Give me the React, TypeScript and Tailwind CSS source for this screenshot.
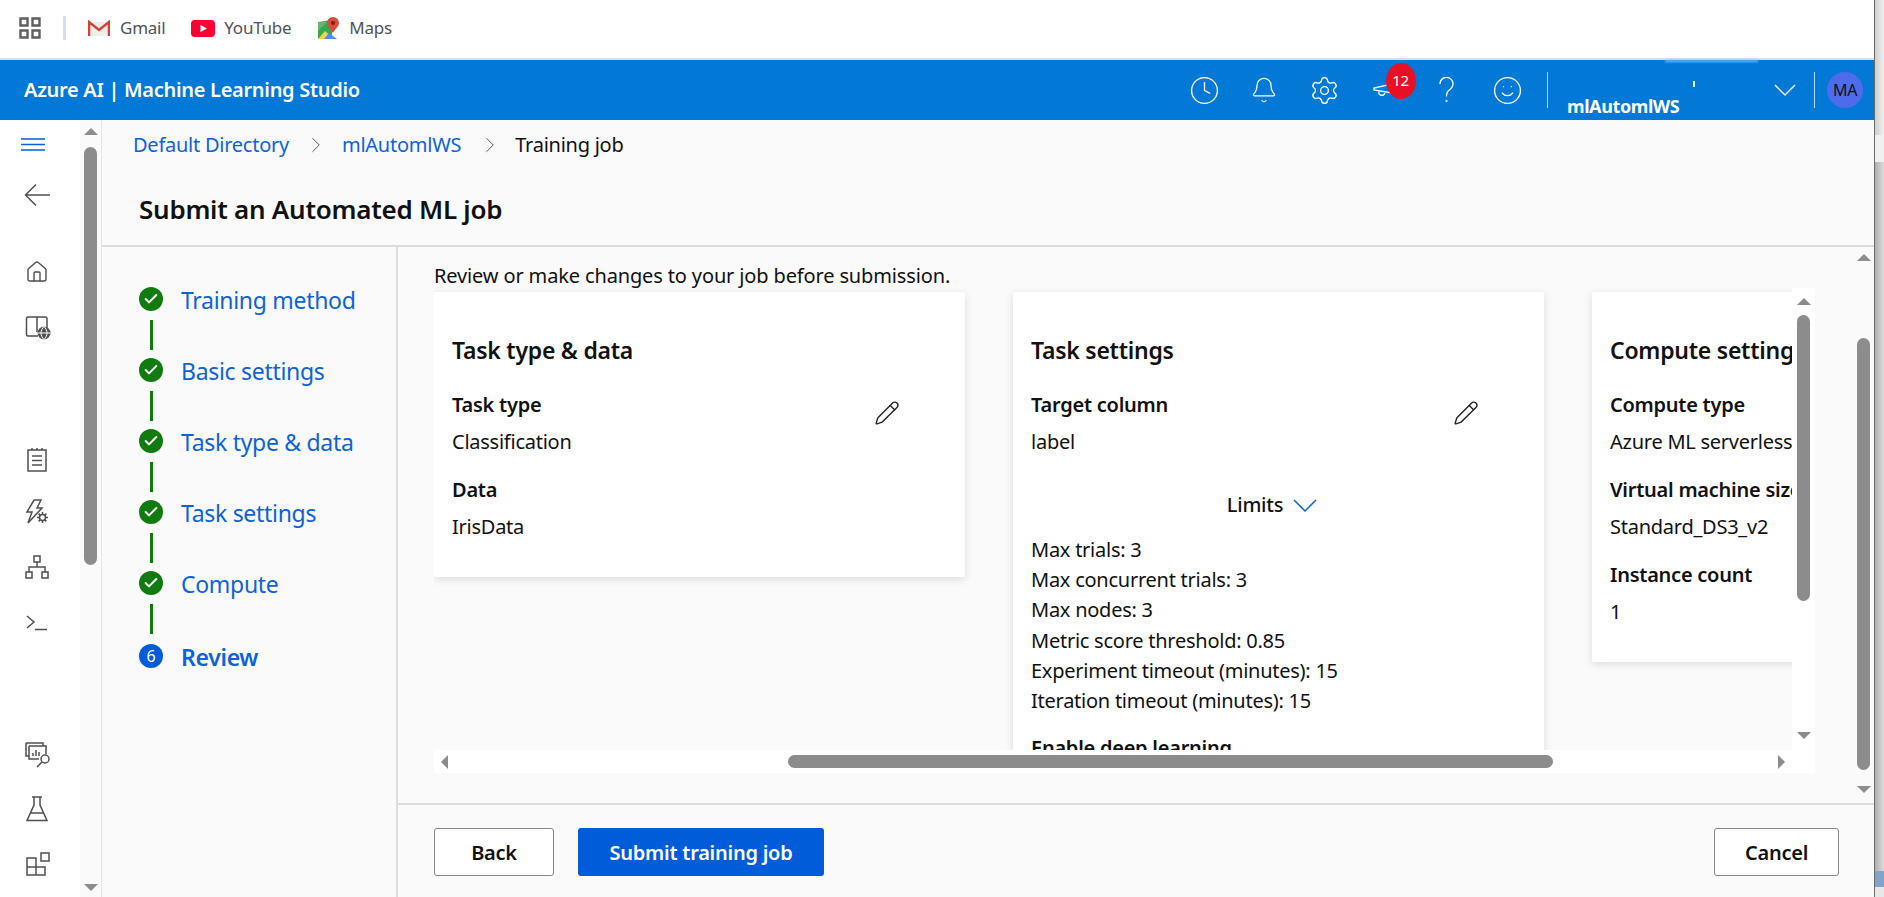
import React from "react";
import { Clock, Bell, Settings, Smile, ChevronRight, Pencil, Home, Check } from "lucide-react";

const Up = () => <div className="w-0 h-0 border-x-[7.5px] border-x-transparent border-b-[7.5px] border-b-[#8c8c8c]" />;
const Down = () => <div className="w-0 h-0 border-x-[7.5px] border-x-transparent border-t-[7.5px] border-t-[#8c8c8c]" />;
const Left = () => <div className="w-0 h-0 border-y-[7.5px] border-y-transparent border-r-[7.5px] border-r-[#8c8c8c]" />;
const Right = () => <div className="w-0 h-0 border-y-[7.5px] border-y-transparent border-l-[7.5px] border-l-[#8c8c8c]" />;

const s = { fill: "none", stroke: "#505050", strokeWidth: 1.5 };

function SideIcons() {
  return (
    <div className="w-[80px] flex flex-col items-center bg-white">
      <div className="mt-[12px] h-[24px] flex items-center ml-[-14px]">
        <svg width="24" height="13" viewBox="0 0 24 13"><path d="M0 1h24M0 6.500h24M0 12h24" stroke="#0b5cd5" strokeWidth="1.300" /></svg>
      </div>
      <div className="mt-[27px] h-[24px] flex items-center ml-[-6px]">
        <svg width="26" height="24" viewBox="0 0 26 24"><path d="M26 12H2M12 1.500L1.500 12 12 22.500" fill="none" stroke="#505050" strokeWidth="1.500" /></svg>
      </div>
      <div className="mt-[53px] h-[24px] flex items-center ml-[-6px]"><Home size={24} strokeWidth={1.4} color="#505050" /></div>
      <div className="mt-[31px] h-[24px] flex items-center ml-[-4px]">
        <svg width="26" height="26" viewBox="0 0 26 26">
          <path d="M12 3H3a1.500 1.500 0 0 0-1.500 1.500v16A1.500 1.500 0 0 0 3 22h10M12 3v15M12 3h8.500a1.500 1.500 0 0 1 1.500 1.500V14" {...s} />
          <circle cx="19" cy="19" r="6.500" fill="#505050" />
          <path d="M12.500 19h13M19 12.500c-4 4-4 9 0 13M19 12.500c4 4 4 9 0 13" fill="none" stroke="#fff" strokeWidth="1" />
        </svg>
      </div>
      <div className="mt-[109px] h-[24px] flex items-center ml-[-6px]">
        <svg width="20" height="24" viewBox="0 0 20 24"><path d="M1 2h18v21H1zM5 0v2M10 0v2M15 0v2M5 8h10M5 12.500h10M5 17h10" {...s} /></svg>
      </div>
      <div className="mt-[28px] h-[24px] flex items-center ml-[-6px]">
        <svg width="24" height="26" viewBox="0 0 24 26">
          <path d="M9 1h7l-4 8h5L3 24l4-11H2z" {...s} />
          <circle cx="17.500" cy="18.500" r="3" {...s} />
          <path d="M17.500 13v2.500M17.500 21.500V24M12 18.500h2.500M20.500 18.500H23M13.600 14.600l1.800 1.800M19.600 20.600l1.800 1.800M13.600 22.400l1.800-1.800M19.600 16.400l1.800-1.800" {...s} />
        </svg>
      </div>
      <div className="mt-[31px] h-[24px] flex items-center ml-[-6px]">
        <svg width="24" height="24" viewBox="0 0 24 24"><path d="M9 1h6v6H9zM1 17h6v6H1zM17 17h6v6h-6zM12 7v5M4 17v-5h16v5" {...s} /></svg>
      </div>
      <div className="mt-[32px] h-[24px] flex items-center ml-[-6px]">
        <svg width="22" height="16" viewBox="0 0 22 16"><path d="M1 1l7 6-7 6M9 14.500h12" {...s} /></svg>
      </div>
      <div className="mt-[108px] h-[24px] flex items-center ml-[-4px]">
        <svg width="26" height="26" viewBox="0 0 26 26">
          <path d="M1 1h17v3M1 1v13h3M4 4h17v8M4 4v13h10" {...s} />
          <path d="M8 14v-3M11 14V8M14 14v-4" {...s} />
          <circle cx="20" cy="17" r="4" {...s} />
          <path d="M17 20l-5 5" {...s} />
        </svg>
      </div>
      <div className="mt-[30px] h-[24px] flex items-center ml-[-6px]">
        <svg width="22" height="26" viewBox="0 0 22 26"><path d="M6 1h10M8 1v8L1 24.500h20L14 9V1M4.500 17h13" {...s} /></svg>
      </div>
      <div className="mt-[31px] h-[24px] flex items-center ml-[-4px]">
        <svg width="24" height="24" viewBox="0 0 24 24"><path d="M1 6h9v9H1zM1 15h9v8H1zM10 15h9v8h-9zM15 1h8v8h-8z" {...s} /></svg>
      </div>
    </div>
  );
}

function Step({ label, n, last }: { label: string; n?: number; last?: boolean }) {
  return (
    <div className={n ? "mt-[10px]" : ""}>
      <div className="flex items-center h-[24px]">
        {n ? (
          <div className="w-[24px] h-[24px] rounded-full bg-[#015cda] text-white text-[16px] flex items-center justify-center">{n}</div>
        ) : (
          <div className="w-[24px] h-[24px] rounded-full bg-[#107c10] flex items-center justify-center"><Check size={16} strokeWidth={3} color="#fff" /></div>
        )}
        <span className={"ml-[18px] mt-[2px] text-[#0f62d8] text-[23px] tracking-[-0.3px] " + (n ? "font-semibold" : "")}>{label}</span>
      </div>
      {!last && !n && <div className="ml-[11px] mt-[9px] mb-[8px] w-[3px] h-[30px] bg-[#107c10]" />}
    </div>
  );
}

function Field({ label, value, first }: { label: string; value: string; first?: boolean }) {
  return (
    <>
      <div className={"leading-[30px] font-semibold whitespace-nowrap " + (first ? "mt-[25px]" : "mt-[18px]")}>{label}</div>
      <div className="leading-[30px] mt-[7px] whitespace-nowrap">{value}</div>
    </>
  );
}

function EditPencil() {
  return <Pencil size={26} strokeWidth={1.3} color="#222" />;
}

export default function App() {
  return (
    <div className="flex w-[1884px] h-[897px] overflow-hidden bg-white text-[20px] tracking-[-0.25px] text-[#111] font-['Noto_Sans',sans-serif]">
      <div className="w-[1874px] flex flex-col">
        {/* bookmarks */}
        <div className="h-[60px] border-b-2 border-[#d5e0e8] flex items-center pb-[2px] bg-white text-[#505458] text-[17px] shrink-0">
          <svg width="22" height="22" viewBox="0 0 22 22" className="ml-[19px]"><path d="M1.500 1.500h7v7h-7zM13.500 1.500h7v7h-7zM1.500 13.500h7v7h-7zM13.500 13.500h7v7h-7z" fill="none" stroke="#5f5f5f" strokeWidth="2.400" /></svg>
          <div className="ml-[22px] w-[3px] h-[24px] bg-[#d0dff3]" />
          <svg width="22" height="17" viewBox="0 0 22 17" className="ml-[22px]">
            <path d="M1 2h20v14H1z" fill="#f1eeea" />
            <path d="M1 16V2l10 8 10-8v14" fill="none" stroke="#d0453a" strokeWidth="2.500" />
          </svg>
          <span className="ml-[10px]">Gmail</span>
          <svg width="24" height="17" viewBox="0 0 24 17" className="ml-[26px]">
            <rect width="24" height="17" rx="4" fill="#ff0033" />
            <path d="M9.500 5l6.500 3.500-6.500 3.500z" fill="#fff" />
          </svg>
          <span className="ml-[9px]">YouTube</span>
          <svg width="22" height="22" viewBox="0 0 22 22" className="ml-[27px]">
            <path d="M0 5l14-2v19H0z" fill="#35a853" />
            <path d="M0 22l7-8 9 8z" fill="#f9d34a" />
            <path d="M6 22l5-6 8 6z" fill="#4f8df5" />
            <path d="M0 5h9L0 14z" fill="#6bb46c" />
            <path d="M15 0a6 6 0 0 1 6 6c0 3-3 5-6 10-3-5-6-7-6-10a6 6 0 0 1 6-6z" fill="#dc4b3f" />
            <circle cx="15" cy="6" r="2" fill="#7a2019" />
          </svg>
          <span className="ml-[9px]">Maps</span>
        </div>
        {/* header */}
        <div className="h-[60px] bg-[#0278d7] flex items-center text-white shrink-0">
          <div className="ml-[24px] text-[20px] font-semibold tracking-[-0.3px] whitespace-nowrap">Azure AI | Machine Learning Studio</div>
          <div className="flex-1" />
          <div className="w-[60px] flex justify-center"><Clock size={31} strokeWidth={1.05} /></div>
          <div className="w-[60px] flex justify-center"><Bell size={28} strokeWidth={1.1} /></div>
          <div className="w-[61px] flex justify-center"><Settings size={31} strokeWidth={1.05} /></div>
          <div className="w-[60px] flex justify-center">
            <div className="relative w-[25px] h-[25px]">
              <svg width="25" height="25" viewBox="0 0 25 25"><path d="M1 10l18-4v9L1 12zM6 13.500a3 3 0 0 0 6 1.500" fill="none" stroke="#fff" strokeWidth="1.300" /></svg>
              <div className="absolute left-[13px] top-[-15px] w-[30px] h-[36px] rounded-[50%] bg-[#e81123] flex items-center justify-center text-[15px] text-white">12</div>
            </div>
          </div>
          <div className="w-[62px] flex justify-center">
            <svg width="15" height="26" viewBox="0 0 15 26"><path d="M1 7a6.500 6.500 0 1 1 10.500 5c-3 2.300-4 3.500-4 7.500" fill="none" stroke="#fff" strokeWidth="1.300" /><circle cx="7.500" cy="24" r="1.100" fill="#fff" /></svg>
          </div>
          <div className="w-[61px] flex justify-center"><Smile size={31} strokeWidth={1.05} /></div>
          <div className="ml-[9px] w-px h-[36px] bg-[#b9d7f0]" />
          <div className="ml-[19px] w-[207px] h-[60px] relative">
            <div className="absolute top-[36px] left-0 text-[18px] font-bold tracking-[-0.4px] leading-[20px]">mlAutomlWS</div>
            <div className="absolute left-[126px] top-[21px] w-[2px] h-[6px] bg-[#e3f0fb]" />
            <div className="absolute left-[98px] top-0 w-[93px] h-[2px] bg-[#7cc0ef] blur-[1px]" />
          </div>
          <svg width="22" height="12" viewBox="0 0 22 12"><path d="M1 1l10 10L21 1" fill="none" stroke="#fff" strokeWidth="1.400" /></svg>
          <div className="ml-[18px] w-px h-[36px] bg-[#b9d7f0]" />
          <div className="ml-[12px] mr-[11px] w-[36px] h-[36px] rounded-full bg-[#4f6bed] flex items-center justify-center text-[16px] text-[#111]">MA</div>
        </div>
        {/* body */}
        <div className="flex flex-1 min-h-0">
          <SideIcons />
          <div className="w-[22px] bg-[#fafafa] border-r border-[#e5e5e5] flex flex-col items-center relative">
            <div className="mt-[8px]"><Up /></div>
            <div className="mt-[12px] w-[13px] h-[418px] rounded-full bg-[#8c8c8c]" />
            <div className="mt-auto mb-[6px]"><Down /></div>
          </div>
          <div className="flex-1 flex flex-col bg-[#fafafa] min-w-0">
            <div className="h-[127px] border-b-2 border-[#dcdcdc] shrink-0">
              <div className="h-[50px] pl-[31px] flex items-center">
                <span className="text-[#0f62d8]">Default Directory</span>
                <ChevronRight size={26} strokeWidth={0.9} color="#555" className="ml-[14px]" />
                <span className="ml-[13px] text-[#0f62d8]">mlAutomlWS</span>
                <ChevronRight size={26} strokeWidth={0.9} color="#555" className="ml-[16px]" />
                <span className="ml-[12px]">Training job</span>
              </div>
              <div className="mt-[17px] pl-[37px] text-[26px] font-semibold leading-[44px]">Submit an Automated ML job</div>
            </div>
            <div className="flex flex-1 min-h-0">
              <div className="w-[296px] shrink-0 border-r-2 border-[#dcdcdc] pl-[37px] pt-[40px]">
                <Step label="Training method" />
                <Step label="Basic settings" />
                <Step label="Task type & data" />
                <Step label="Task settings" />
                <Step label="Compute" />
                <Step label="Review" n={6} last />
              </div>
              <div className="flex-1 flex flex-col min-w-0">
                <div className="h-[556px] flex shrink-0">
                  <div className="w-[1452px] shrink-0 pl-[36px] pb-[30px] flex flex-col">
                    <div className="h-[41px] leading-[58px] whitespace-nowrap tracking-[-0.14px]">Review or make changes to your job before submission.</div>
                    <div className="flex flex-1 min-h-0 pr-[35px]">
                      <div className="flex-1 flex flex-col min-w-0">
                        <div className="flex-1 min-h-0 overflow-hidden flex items-start gap-[48px] pt-[4px]">
                          <div className="w-[531px] shrink-0 bg-white rounded-[2px] shadow-[0_2px_8px_rgba(0,0,0,0.13)] pt-[43px] px-[18px] pb-[35px] relative">
                            <div className="text-[23px] font-semibold leading-[30px]">Task type &amp; data</div>
                            <Field first label="Task type" value="Classification" />
                            <Field label="Data" value="IrisData" />
                            <div className="absolute left-[440px] top-[108px]"><EditPencil /></div>
                          </div>
                          <div className="w-[531px] shrink-0 bg-white rounded-[2px] shadow-[0_2px_8px_rgba(0,0,0,0.13)] pt-[43px] px-[18px] pb-[35px] relative">
                            <div className="text-[23px] font-semibold leading-[30px]">Task settings</div>
                            <Field first label="Target column" value="label" />
                            <div className="mt-[33px] h-[30px] flex items-center justify-center mr-[13px]">
                              <span className="font-medium">Limits</span>
                              <svg width="24" height="13" viewBox="0 0 24 13" className="ml-[10px]"><path d="M1 1l11 11L23 1" fill="none" stroke="#0f62d8" strokeWidth="1.500" /></svg>
                            </div>
                            <div className="mt-[15px] leading-[30.200px] whitespace-nowrap">
                              <div>Max trials: 3</div>
                              <div>Max concurrent trials: 3</div>
                              <div>Max nodes: 3</div>
                              <div>Metric score threshold: 0.85</div>
                              <div>Experiment timeout (minutes): 15</div>
                              <div>Iteration timeout (minutes): 15</div>
                            </div>
                            <div className="mt-[17px] leading-[30px] font-semibold">Enable deep learning</div>
                            <div className="absolute left-[440px] top-[108px]"><EditPencil /></div>
                          </div>
                          <div className="w-[531px] shrink-0 bg-white rounded-[2px] shadow-[0_2px_8px_rgba(0,0,0,0.13)] pt-[43px] px-[18px] pb-[35px]">
                            <div className="text-[23px] font-semibold leading-[30px]">Compute settings</div>
                            <Field first label="Compute type" value="Azure ML serverless" />
                            <Field label="Virtual machine size" value="Standard_DS3_v2" />
                            <Field label="Instance count" value="1" />
                          </div>
                        </div>
                        <div className="h-[23px] bg-white flex items-center shrink-0">
                          <div className="ml-[7px]"><Left /></div>
                          <div className="ml-[340px] w-[765px] h-[13px] rounded-full bg-[#8c8c8c]" />
                          <div className="ml-auto mr-[7px]"><Right /></div>
                        </div>
                      </div>
                      <div className="w-[23px] bg-white flex flex-col items-center shrink-0">
                        <div className="mt-[10px]"><Up /></div>
                        <div className="mt-[10px] w-[13px] h-[286px] rounded-full bg-[#8c8c8c]" />
                        <div className="mt-[131px]"><Down /></div>
                      </div>
                    </div>
                  </div>
                  <div className="w-[24px] flex flex-col items-center shrink-0 pl-[3px]">
                    <div className="mt-[7px]"><Up /></div>
                    <div className="mt-[77px] w-[13px] h-[432px] rounded-full bg-[#8c8c8c]" />
                    <div className="mt-[16px]"><Down /></div>
                  </div>
                </div>
                <div className="flex-1 border-t-2 border-[#dcdcdc] pl-[36px] pr-[35px] pt-[23px] flex items-start font-semibold">
                  <div className="w-[120px] h-[48px] pt-[2px] bg-white border border-[#8a8886] rounded-[3px] flex items-center justify-center">Back</div>
                  <div className="ml-[24px] w-[246px] h-[48px] pt-[2px] bg-[#015cda] text-white rounded-[3px] flex items-center justify-center">Submit training job</div>
                  <div className="ml-auto w-[125px] h-[48px] pt-[2px] bg-white border border-[#8a8886] rounded-[3px] flex items-center justify-center">Cancel</div>
                </div>
              </div>
            </div>
          </div>
        </div>
      </div>
      <div className="w-[10px] border-l border-[#6b6b6b] flex flex-col shrink-0">
        <div className="h-[135px] bg-linear-to-r from-[#cfcfcf] to-[#f0f0f0]" />
        <div className="h-[27px] bg-[#f0f0f0]" />
        <div className="flex-1 bg-linear-to-r from-[#b0b0b0] to-[#dcdcdc]" />
        <div className="h-[16px] bg-[#7fa6c4]" />
        <div className="h-[10px] bg-[#e8e8e8]" />
      </div>
    </div>
  );
}
